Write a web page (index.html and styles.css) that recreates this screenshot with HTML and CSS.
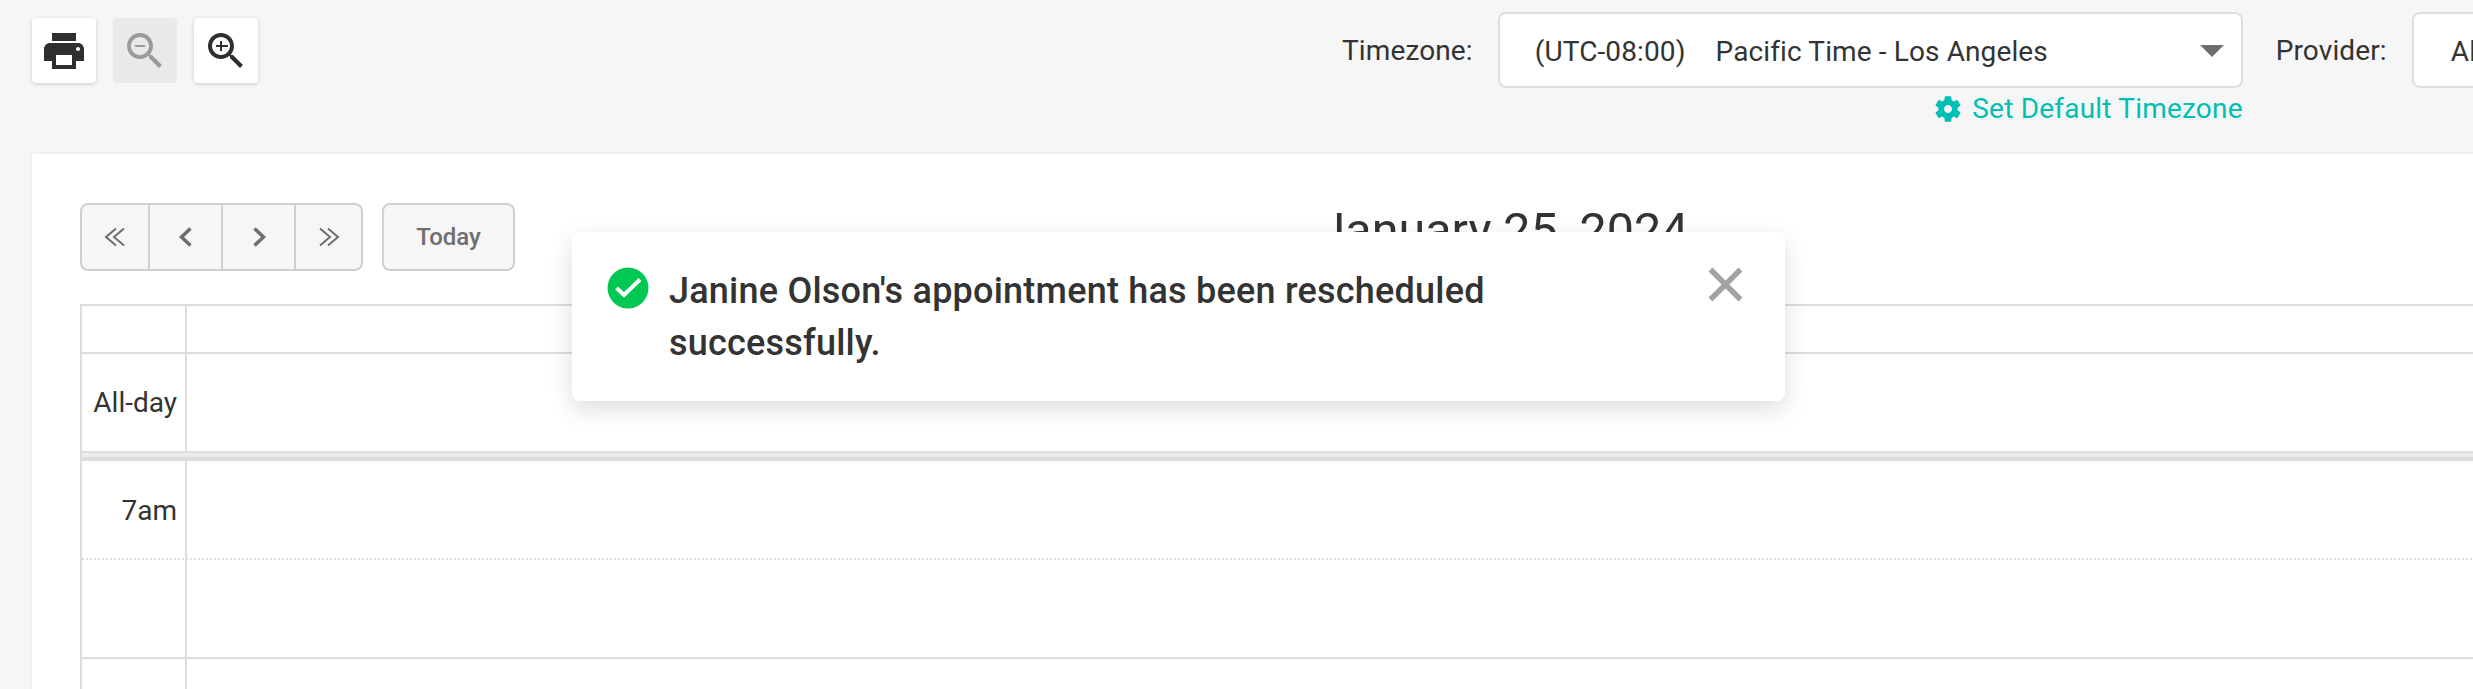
FILE: index.html
```html
<!DOCTYPE html>
<html lang="en">
<head>
<meta charset="utf-8">
<title>Calendar</title>
<link rel="stylesheet" href="styles.css">
</head>
<body>
<div class="page">
  <header class="topbar">
    <div class="tools">
      <button class="tool" type="button" aria-label="Print">
        <svg viewBox="0 0 24 24" class="tool-icon"><path d="M19 8H5c-1.66 0-3 1.34-3 3v6h4v4h12v-4h4v-6c0-1.66-1.34-3-3-3zm-3 11H8v-5h8v5zm3-7c-.55 0-1-.45-1-1s.45-1 1-1 1 .45 1 1-.45 1-1 1zm-1-9H6v4h12V3z"/></svg>
      </button>
      <button class="tool tool-off" type="button" aria-label="Zoom out">
        <svg viewBox="0 0 24 24" class="tool-icon"><path d="M15.5 14h-.79l-.28-.27C15.41 12.59 16 11.11 16 9.5 16 5.91 13.09 3 9.5 3S3 5.91 3 9.5 5.91 16 9.5 16c1.61 0 3.09-.59 4.23-1.57l.27.28v.79l5 4.99L20.49 19l-4.99-5zm-6 0C7.01 14 5 11.99 5 9.5S7.01 5 9.5 5 14 7.01 14 9.5 11.99 14 9.5 14zM7 9h5v1H7z"/></svg>
      </button>
      <button class="tool" type="button" aria-label="Zoom in">
        <svg viewBox="0 0 24 24" class="tool-icon"><path d="M15.5 14h-.79l-.28-.27C15.41 12.59 16 11.11 16 9.5 16 5.91 13.09 3 9.5 3S3 5.91 3 9.5 5.91 16 9.5 16c1.61 0 3.09-.59 4.23-1.57l.27.28v.79l5 4.99L20.49 19l-4.99-5zm-6 0C7.01 14 5 11.99 5 9.5S7.01 5 9.5 5 14 7.01 14 9.5 11.99 14 9.5 14zM12 10h-2v2H9v-2H7V9h2V7h1v2h3v1z"/></svg>
      </button>
    </div>
    <div class="filters">
      <span class="filter-label">Timezone:</span>
      <div class="tz-col">
        <div class="select select-tz">
          <span class="tz-offset">(UTC-08:00)</span><span>Pacific Time - Los Angeles</span>
          <span class="caret"></span>
        </div>
        <a class="set-default" href="#">
          <svg viewBox="0 0 24 24" class="gear"><path d="M19.14 12.94c.04-.3.06-.61.06-.94 0-.32-.02-.64-.07-.94l2.03-1.58c.18-.14.23-.41.12-.61l-1.92-3.32c-.12-.22-.37-.29-.59-.22l-2.39.96c-.5-.38-1.03-.7-1.62-.94l-.36-2.54c-.04-.24-.24-.41-.48-.41h-3.84c-.24 0-.43.17-.47.41l-.36 2.54c-.59.24-1.13.57-1.62.94l-2.39-.96c-.22-.08-.47 0-.59.22L2.74 8.87c-.12.21-.08.47.12.61l2.03 1.58c-.05.3-.09.63-.09.94s.02.64.07.94l-2.03 1.58c-.18.14-.23.41-.12.61l1.92 3.32c.12.22.37.29.59.22l2.39-.96c.5.38 1.03.7 1.62.94l.36 2.54c.05.24.24.41.48.41h3.84c.24 0 .44-.17.47-.41l.36-2.54c.59-.24 1.13-.56 1.62-.94l2.39.96c.22.08.47 0 .59-.22l1.92-3.32c.12-.22.07-.47-.12-.61l-2.01-1.58zM12 15c-1.65 0-3-1.35-3-3s1.35-3 3-3 3 1.35 3 3-1.35 3-3 3z"/></svg>
          <span>Set Default Timezone</span>
        </a>
      </div>
      <span class="filter-label">Provider:</span>
      <div class="select select-provider"><span>All</span><span class="caret"></span></div>
    </div>
  </header>

  <main class="card">
    <div class="cal-toolbar">
      <div class="cal-nav">
        <div class="btn-group">
          <button class="nav-btn nav-first" type="button" aria-label="Previous year">
            <svg viewBox="0 0 24 24" class="nav-icon thin"><path d="M13 3.500l-10 8.500 10 8.500M21 3.500l-10 8.500 10 8.500"/></svg>
          </button>
          <button class="nav-btn" type="button" aria-label="Previous">
            <svg viewBox="0 0 24 24" class="nav-icon"><path d="M16.500 3.500l-9 8.500 9 8.500"/></svg>
          </button>
          <button class="nav-btn" type="button" aria-label="Next">
            <svg viewBox="0 0 24 24" class="nav-icon"><path d="M7.500 3.500l9 8.500-9 8.500"/></svg>
          </button>
          <button class="nav-btn nav-last" type="button" aria-label="Next year">
            <svg viewBox="0 0 24 24" class="nav-icon thin"><path d="M3 3.500l10 8.500-10 8.500M11 3.500l10 8.500-10 8.500"/></svg>
          </button>
        </div>
        <button class="today" type="button">Today</button>
      </div>
      <h1 class="cal-title">January 25, 2024</h1>
    </div>

    <div class="grid">
      <div class="row row-head"><div class="axis"></div><div class="slot"></div></div>
      <div class="row row-allday"><div class="axis">All-day</div><div class="slot"></div></div>
      <div class="divider"></div>
      <div class="row row-half row-dotted"><div class="axis">7am</div><div class="slot"></div></div>
      <div class="row row-half row-solid"><div class="axis"></div><div class="slot"></div></div>
      <div class="row row-half row-dotted"><div class="axis"></div><div class="slot"></div></div>
    </div>
  </main>

  <div class="toast" role="status">
    <svg viewBox="0 0 42 42" class="toast-check"><circle cx="21" cy="21" r="20.500" fill="#00c853"/><path d="M9.500 21l7.500 7L33 12.500" fill="none" stroke="#fff" stroke-width="4"/></svg>
    <p class="toast-text">Janine Olson's appointment has been rescheduled successfully.</p>
    <svg viewBox="0 0 35 35" class="toast-close"><path d="M2.500 2.500l30 30M32.500 2.500l-30 30" fill="none" stroke="#a3a3a3" stroke-width="5.500"/></svg>
  </div>
</div>
</body>
</html>
```

FILE: styles.css
```css
* { box-sizing: border-box; }
html, body { margin: 0; height: 100%; overflow: hidden; }
body {
  background: #f6f6f6;
  color: #333;
  font-family: Roboto, "Liberation Sans", sans-serif;
  font-size: 28px;
  letter-spacing: .12px;
}
.page { position: relative; width: 3018px; height: 689px; overflow: hidden; }

.topbar { display: flex; align-items: flex-start; height: 154px; padding: 12px 0 0 32px; }
.tools { display: flex; gap: 17px; padding-top: 6px; }
.tool {
  width: 64px; height: 65px; padding: 0; border: 0; border-radius: 4px;
  background: #fff; box-shadow: 0 1px 4px rgba(0,0,0,.18);
  display: flex; align-items: center; justify-content: center;
}
.tool-icon { width: 48px; height: 48px; fill: #2f2f2f; display: block; }
.tool-off { background: #e9e9e9; box-shadow: none; }
.tool-off .tool-icon { fill: #9a9a9a; }

.filters { display: flex; align-items: flex-start; margin-left: 1084px; }
.filter-label { line-height: 77px; margin-right: 25px; }
.tz-col { display: flex; flex-direction: column; align-items: flex-end; margin-right: 33px; }
.select {
  position: relative; display: flex; align-items: center; height: 76px; padding-top: 2px;
  background: #fff; border: 2px solid #dedede; border-radius: 8px;
}
.select-tz { width: 745px; padding-left: 35px; }
.tz-offset { margin-right: 30px; }
.select-provider { width: 500px; padding-left: 37px; }
.caret {
  position: absolute; right: 17px; top: 31px; width: 0; height: 0;
  border-left: 12px solid transparent; border-right: 12px solid transparent; border-top: 12px solid #6e6e6e;
}
.set-default { display: flex; align-items: center; gap: 8px; margin-top: 5px; color: #00bfb3; text-decoration: none; line-height: 32px; letter-spacing: .2px; }
.gear { width: 32px; height: 32px; fill: #00bfb3; display: block; }

.card { margin-left: 32px; width: 2943px; height: 535px; padding: 49px 48px 0; background: #fff; box-shadow: 0 0 3px rgba(0,0,0,.08); }
.cal-toolbar { position: relative; display: flex; align-items: flex-start; height: 101px; }
.cal-nav { display: flex; gap: 19px; }
.btn-group { display: flex; height: 68px; border: 2px solid #cfcfcf; border-radius: 8px; background: #f6f6f6; }
.nav-btn {
  width: 73px; padding: 0; border: 0; border-right: 2px solid #cfcfcf; background: transparent;
  display: flex; align-items: center; justify-content: center;
}
.nav-first { width: 68px; border-radius: 6px 0 0 6px; }
.nav-last { width: 65px; border-right: 0; border-radius: 0 6px 6px 0; }
.nav-icon { width: 24px; height: 24px; display: block; fill: none; stroke: #6e6e6e; stroke-width: 3.500; }
.nav-icon.thin { stroke-width: 2; }
.today {
  width: 133px; height: 68px; padding: 0; border: 2px solid #cfcfcf; border-radius: 8px;
  background: #f6f6f6; color: #6e6e6e; font: 500 24px Roboto, "Liberation Sans", sans-serif;
}
.cal-title {
  position: absolute; left: 0; right: 0; top: 0; margin: 0; text-align: center;
  font-size: 48.500px; font-weight: 400; line-height: 56px; color: #333; letter-spacing: 0;
}

.grid { border-left: 2px solid #ddd; border-top: 2px solid #ddd; }
.row { display: flex; border-bottom: 2px solid #ddd; }
.axis { width: 105px; flex: none; border-right: 2px solid #ddd; text-align: right; padding-right: 8px; letter-spacing: 0; }
.slot { flex: 1; }
.row-head { height: 48px; }
.row-allday { height: 97px; border-bottom: 0; }
.row-allday .axis { line-height: 98px; }
.divider { height: 10px; background: linear-gradient(#dcdcdc 0 2px, #ececec 2px 6px, #dcdcdc 6px); }
.row-half { height: 99px; }
.row-dotted {
  border-bottom: 0;
  background: repeating-linear-gradient(90deg, #ddd 0 2px, transparent 2px 4px) left bottom / 100% 2px no-repeat;
}
.row-half .axis { padding-top: 34px; line-height: 32px; }
.row-solid { border-bottom: 2px solid #ddd; }

.toast {
  position: absolute; left: 572px; top: 232px; width: 1213px; height: 169px;
  display: flex; align-items: flex-start; padding: 35px 42px 0 35px;
  background: #fff; border-radius: 8px; box-shadow: 0 8px 24px rgba(0,0,0,.14);
}
.toast-check { width: 42px; height: 42px; flex: none; }
.toast-text { flex: 1; margin: -2px 120px 0 20px; font-size: 36px; font-weight: 500; line-height: 52px; letter-spacing: .22px; color: #333; }
.toast-close { width: 35px; height: 35px; flex: none; }
```
